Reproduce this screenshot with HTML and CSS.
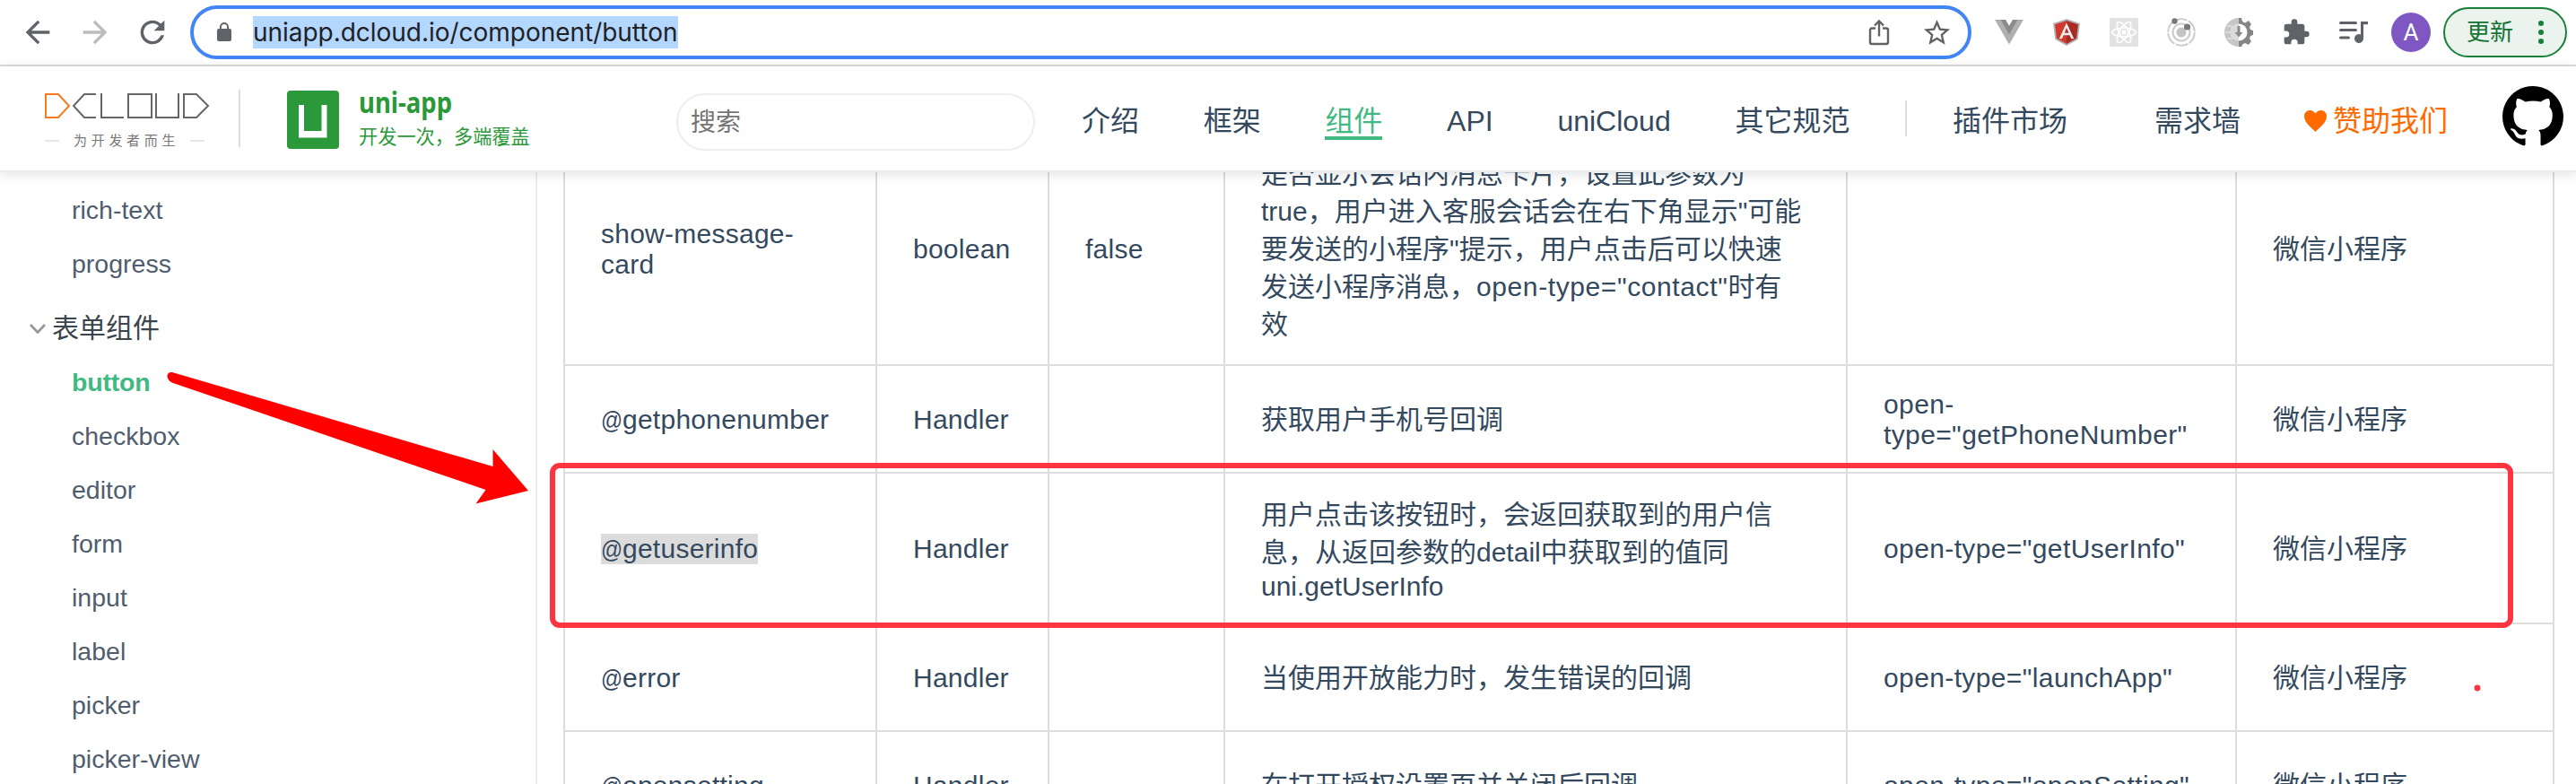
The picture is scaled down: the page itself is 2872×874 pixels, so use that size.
FILE: index.html
```html
<!DOCTYPE html>
<html lang="zh-CN">
<head>
<meta charset="utf-8">
<title>button | uni-app</title>
<link rel="stylesheet" href="styles.css">
</head>
<body>
<div class="browser-bar">
  <div class="controls">
    <svg class="ctl" viewBox="0 0 24 24"><path fill="#5f6368" d="M20 11H7.83l5.59-5.59L12 4l-8 8 8 8 1.41-1.41L7.83 13H20v-2z"/></svg>
    <svg class="ctl" viewBox="0 0 24 24"><path fill="#babcbe" d="M12 4l-1.41 1.41L16.17 11H4v2h12.17l-5.58 5.59L12 20l8-8z"/></svg>
    <svg class="ctl" viewBox="0 0 24 24"><path fill="#5f6368" d="M17.65 6.35A7.96 7.96 0 0 0 12 4a8 8 0 1 0 7.73 10h-2.08A6 6 0 1 1 12 6c1.66 0 3.14.69 4.22 1.78L13 11h7V4l-2.35 2.35z"/></svg>
  </div>
  <div class="omnibox">
    <svg class="lock" viewBox="0 0 24 24"><path fill="#5f6368" d="M18 8h-1V6A5 5 0 0 0 7 6v2H6a2 2 0 0 0-2 2v10c0 1.100.9 2 2 2h12a2 2 0 0 0 2-2V10a2 2 0 0 0-2-2zM8.900 6a3.100 3.100 0 0 1 6.200 0v2H8.900V6z"/></svg>
    <span class="url">uniapp.dcloud.io/component/button</span>
    <svg class="share" viewBox="0 0 24 30" fill="none" stroke="#5f6368" stroke-width="2.400"><path d="M8 10.500H4a2 2 0 0 0-2 2V26a2 2 0 0 0 2 2h16a2 2 0 0 0 2-2V12.500a2 2 0 0 0-2-2h-4M12 19.500V2.500M7 7.500l5-5 5 5"/></svg>
    <svg class="star" viewBox="0 0 24 24"><path fill="#5f6368" d="M22 9.240l-7.190-.62L12 2 9.190 8.630 2 9.240l5.460 4.730L5.820 21 12 17.270 18.180 21l-1.630-7.030L22 9.240zM12 15.400l-3.760 2.270 1-4.280-3.320-2.880 4.380-.38L12 6.100l1.710 4.040 4.380.38-3.320 2.880 1 4.280L12 15.400z"/></svg>
  </div>
  <div class="extensions">
    <svg viewBox="0 0 32 32"><path fill="#b0b0b0" d="M0 2h12l4 7 4-7h12L16 29.500z"/><path fill="#8b8b8b" d="M6.500 2H12l4 7 4-7h5.500L16 18.500z"/></svg>
    <svg viewBox="0 0 32 32"><path fill="#b3b3b3" d="M16 1l15 5-2.300 18L16 31 3.300 24 1 6z"/><path fill="#d0392f" d="M16 3L3 7.300l2 15.400L16 29z"/><path fill="#a92b24" d="M16 3l13 4.300-2 15.400L16 29z"/><path fill="#eee" fill-rule="evenodd" d="M16 5.500L7.800 23.300h3.100l1.700-4.100h6.900l1.700 4.100h3.100zM16 11l2.400 5.800h-4.800z"/></svg>
    <svg viewBox="0 0 32 32"><rect width="32" height="32" rx="2" fill="#e2e2e2"/><g fill="none" stroke="#fff" stroke-width="1.600"><ellipse cx="16" cy="16" rx="13" ry="5"/><ellipse cx="16" cy="16" rx="13" ry="5" transform="rotate(60 16 16)"/><ellipse cx="16" cy="16" rx="13" ry="5" transform="rotate(120 16 16)"/></g><circle cx="16" cy="16" r="2.600" fill="#fff"/></svg>
    <svg viewBox="0 0 32 32"><g fill="none"><circle cx="16" cy="16" r="14.800" stroke="#ccc" stroke-width="2" stroke-dasharray="14 1.500"/><circle cx="16" cy="16" r="9.500" stroke="#ccc" stroke-width="2.200"/></g><circle cx="16" cy="16" r="5.500" fill="#c4c4c4"/><circle cx="8.500" cy="3.500" r="3.200" fill="#777"/><circle cx="22.500" cy="10" r="3.600" fill="#777"/></svg>
    <svg viewBox="0 0 32 32"><path fill="#c6c6c6" d="M16 0a16 16 0 0 0 0 32z"/><path fill="#858585" d="M16 0h3l1 4 3 1.500L27 3l3 4-2 3 1 3 3 1v5l-3 1-1 3 2 3-3 4-4-2-3 1.500-1 3.500h-3z"/><circle cx="16" cy="16" r="9.500" fill="#fff"/><path fill="#bdbdbd" d="M16 6.500a9.500 9.500 0 0 0 0 19z" opacity=".55"/><path fill="#8b8b8b" d="M14.500 9h3v7h3L16 21.500 11.500 16h3z"/><path stroke="#eee" d="M3 9h6M1 16h5M3 23h6"/></svg>
    <svg viewBox="0 0 24 24"><path fill="#5f6368" d="M20.500 11H19V7a2 2 0 0 0-2-2h-4V3.500a2.500 2.500 0 0 0-5 0V5H4a2 2 0 0 0-1.990 2v3.800H3.500a2.700 2.700 0 0 1 0 5.400H2V20a2 2 0 0 0 2 2h3.800v-1.500a2.700 2.700 0 0 1 5.400 0V22H17a2 2 0 0 0 2-2v-4h1.500a2.500 2.500 0 0 0 0-5z"/></svg>
    <svg viewBox="0 0 32 32"><path fill="none" stroke="#5f6368" stroke-width="3" stroke-linecap="round" d="M1.500 5.500h17M1.500 13.500h17M1.500 22h9"/><path fill="#5f6368" d="M24 4h8v3.200h-5V23a5 5 0 1 1-3-4.600z"/></svg>
  </div>
  <div class="avatar">A</div>
  <div class="update"><span>更新</span><i class="dots"></i></div>
</div>

<header class="site-header">
  <div class="dcloud">
    <svg class="dcloud-mark" viewBox="0 0 184 28" fill="none" stroke-width="2"><path stroke="#f47b20" d="M1 1h14l12 13-12 13H1z"/><g stroke="#666"><path d="M57 1H44L32 14l12 13h13M63 0v27h25M93 1h26v26H93zM124 0v27h25V0M155 1h14l13 13-13 13h-14z"/></g></svg>
    <div class="dcloud-tag"><i></i><span>为开发者而生</span><i></i></div>
  </div>
  <div class="brand">
    <svg class="uni-mark" viewBox="0 0 58 65"><rect width="58" height="65" rx="4" fill="#2b9939"/><path fill="#fff" d="M13.500 16h6v29h19.500V16h6v36.500H13.500z" transform="translate(-.5 0)"/></svg>
    <div class="brand-text"><b>uni-app</b><span>开发一次，多端覆盖</span></div>
  </div>
  <div class="search">搜索</div>
  <nav class="links">
    <a>介绍</a><a>框架</a><a class="active">组件</a><a>API</a><a>uniCloud</a><a>其它规范</a>
  </nav>
  <nav class="links-more">
    <a class="market">插件市场</a><a class="wall">需求墙</a>
    <a class="sponsor"><svg viewBox="0 0 25 24"><path fill="#ff6a00" d="M12.500 24C8 19 0 14 0 6.500C0 2.500 3 0 6.500 0c2.500 0 4.800 1.300 6 3.800C13.700 1.300 16 0 18.500 0 22 0 25 2.500 25 6.500 25 14 17 19 12.500 24z"/></svg>赞助我们</a>
  </nav>
  <svg class="github" viewBox="0 0 16 16"><path d="M8 0C3.580 0 0 3.580 0 8c0 3.540 2.290 6.530 5.470 7.590.4.070.55-.17.55-.38 0-.19-.01-.82-.01-1.490-2.010.37-2.530-.49-2.690-.94-.09-.23-.48-.94-.82-1.130-.28-.15-.68-.52-.01-.53.63-.01 1.080.58 1.230.82.72 1.210 1.870.87 2.330.66.07-.52.28-.87.51-1.070-1.780-.2-3.640-.89-3.640-3.950 0-.87.31-1.590.82-2.150-.08-.2-.36-1.020.08-2.120 0 0 .67-.21 2.200.82.64-.18 1.320-.27 2-.27s1.360.09 2 .27c1.530-1.040 2.200-.82 2.200-.82.44 1.100.16 1.920.08 2.120.51.56.82 1.270.82 2.150 0 3.070-1.870 3.750-3.650 3.950.29.25.54.73.54 1.480 0 1.070-.01 1.930-.01 2.200 0 .21.15.46.55.38A8.010 8.010 0 0 0 16 8c0-4.420-3.580-8-8-8z"/></svg>
</header>

<div class="content">
  <aside class="sidebar">
    <a>rich-text</a>
    <a>progress</a>
    <h3><svg viewBox="0 0 18 11"><path fill="none" stroke="#999" stroke-width="2.800" d="M1 1l8 8.500L17 1"/></svg>表单组件</h3>
    <a class="current">button</a>
    <a>checkbox</a>
    <a>editor</a>
    <a>form</a>
    <a>input</a>
    <a>label</a>
    <a>picker</a>
    <a>picker-view</a>
  </aside>
  <main>
    <table>
      <colgroup><col class="c1"><col class="c2"><col class="c3"><col class="c4"><col class="c5"><col class="c6"></colgroup>
      <tr class="tall">
        <td class="en">show-message-<br>card</td><td class="en">boolean</td><td class="en">false</td>
        <td class="zh">是否显示会话内消息卡片，设置此参数为<br>true，用户进入客服会话会在右下角显示"可能<br>要发送的小程序"提示，用户点击后可以快速<br>发送小程序消息，<span class="en-word">open-type="contact"</span>时有<br>效</td>
        <td></td><td class="zh">微信小程序</td>
      </tr>
      <tr>
        <td class="en"><span class="at">@</span>getphonenumber</td><td class="en">Handler</td><td></td>
        <td class="zh">获取用户手机号回调</td>
        <td class="en wide">open-<br>type="getPhoneNumber"</td><td class="zh">微信小程序</td>
      </tr>
      <tr class="mid">
        <td class="en"><span class="picked"><span class="at">@</span>getuserinfo</span></td><td class="en">Handler</td><td></td>
        <td class="zh">用户点击该按钮时，会返回获取到的用户信<br>息，从返回参数的detail中获取到的值同<div class="en-line">uni.getUserInfo</div></td>
        <td class="en wide">open-type="getUserInfo"</td><td class="zh">微信小程序</td>
      </tr>
      <tr>
        <td class="en"><span class="at">@</span>error</td><td class="en">Handler</td><td></td>
        <td class="zh">当使用开放能力时，发生错误的回调</td>
        <td class="en wide">open-type="launchApp"</td><td class="zh">微信小程序</td>
      </tr>
      <tr>
        <td class="en"><span class="at">@</span>opensetting</td><td class="en">Handler</td><td></td>
        <td class="zh">在打开授权设置页并关闭后回调</td>
        <td class="en wide">open-type="openSetting"</td><td class="zh">微信小程序</td>
      </tr>
    </table>
  </main>
</div>

<svg class="marks" viewBox="0 0 2872 874">
  <path fill="#f00" d="M192 415L549.500 520V501L589 547 530.500 561.500 541.500 546 193 427C184 423 185 414 192 415z"/>
  <rect x="616" y="519" width="2183" height="178" rx="8" fill="none" stroke="#ff3341" stroke-width="6"/>
  <circle cx="2762" cy="767" r="3.400" fill="#ff3341"/>
</svg>
</body>
</html>
```

FILE: styles.css
```css
* { box-sizing: border-box; }

body {
  margin: 0;
  width: 2872px;
  height: 874px;
  overflow: hidden;
  position: relative;
  background: #fff;
  color: #34495e;
  font-family: "Liberation Sans", "Noto Sans CJK SC", sans-serif;
}

svg { display: block; flex: none; }

/* Browser toolbar */
.browser-bar {
  display: flex;
  align-items: center;
  height: 74px;
  padding-left: 22px;
  border-bottom: 2px solid #dcdcdc;
}
.controls { display: flex; gap: 24px; width: 190px; flex: none; }
.ctl { width: 40px; height: 40px; }
.omnibox {
  display: flex;
  align-items: center;
  flex: none;
  width: 1986px;
  height: 60px;
  padding: 0 17px 0 22px;
  border: 4px solid #4285f4;
  border-radius: 30px;
}
.lock { width: 24px; height: 24px; margin-right: 20px; }
.url {
  width: 474px;
  height: 36px;
  line-height: 36px;
  background: #b3d7ff;
  color: #202124;
  font-family: Inter, "Liberation Sans", sans-serif;
  font-size: 28px;
  letter-spacing: -0.03px;
  white-space: nowrap;
}
.share { width: 24px; height: 30px; margin-left: auto; margin-right: 35px; }
.star { width: 35px; height: 35px; }
.extensions { display: flex; align-items: center; gap: 32px; margin-left: 26px; }
.extensions svg { width: 32px; height: 32px; }
.avatar {
  width: 44px;
  height: 44px;
  margin-left: 26px;
  border-radius: 50%;
  background: #7e57c2;
  color: #fff;
  font: 26px/45px Roboto, sans-serif;
  text-align: center;
}
.update {
  display: flex;
  align-items: center;
  width: 138px;
  height: 56px;
  margin-left: 14px;
  padding-left: 24px;
  border: 2px solid #188038;
  border-radius: 28px;
  background: #ebf3ee;
  color: #137333;
  font-size: 26px;
  line-height: 52px;
}
.dots {
  width: 6px;
  height: 6px;
  margin-left: 28px;
  border-radius: 50%;
  background: #188038;
  box-shadow: 0 -10px #188038, 0 10px #188038;
}

/* Site header */
.site-header {
  position: relative;
  z-index: 2;
  display: flex;
  align-items: flex-start;
  height: 118px;
  padding-left: 50px;
  background: #fff;
  border-bottom: 2px solid #eaecef;
  box-shadow: 0 2px 12px rgba(0, 20, 50, 0.13);
}
.dcloud {
  width: 218px;
  height: 64px;
  margin-top: 26px;
  padding-top: 4px;
  border-right: 2px solid #ddd;
}
.dcloud-mark { width: 184px; height: 28px; }
.dcloud-tag {
  display: flex;
  align-items: center;
  margin-top: 13px;
  color: #777;
  font-size: 15px;
  line-height: 24px;
  letter-spacing: 4.7px;
}
.dcloud-tag i { width: 16px; height: 2px; background: #e6e6e6; }
.dcloud-tag span { width: 130px; padding-left: 16px; margin-right: 16px; white-space: nowrap; }
.brand { display: flex; width: 434px; margin: 27px 0 0 52px; }
.uni-mark { width: 58px; height: 65px; }
.brand-text { margin-left: 22px; color: #2b9939; }
.brand-text b {
  display: block;
  height: 35px;
  margin-top: -5px;
  font: bold 32px/35px "Noto Sans", "Open Sans", sans-serif;
  transform: scaleX(0.86);
  transform-origin: left;
}
.brand-text span { display: block; font-size: 21.2px; line-height: 30px; margin-top: 7px; }
.search {
  width: 400px;
  height: 64px;
  margin-top: 30px;
  padding-left: 14px;
  border: 2px solid #eee;
  border-radius: 32px;
  color: #757575;
  font-size: 28px;
  line-height: 61px;
}
.links {
  display: flex;
  gap: 71.700px;
  width: 920px;
  height: 40px;
  margin: 38px 0 0 52px;
  border-right: 2px solid #ddd;
}
.links a, .links-more a { font-size: 32px; line-height: 46px; white-space: nowrap; }
.links a { height: 44px; }
.links .active { color: #42b983; border-bottom: 4px solid #42b983; }
.links-more { display: flex; width: 664px; margin-top: 38px; padding-left: 51px; }
.wall { margin-left: 97px; }
.sponsor { display: flex; align-items: center; gap: 7px; margin-left: 71px; color: #ff6a00; }
.sponsor svg { width: 25px; height: 24px; }
.github { width: 68px; height: 68px; margin-top: 22px; }

/* Page body */
.content { display: flex; height: 682px; overflow: hidden; }
.sidebar {
  width: 599px;
  flex: none;
  height: 682px;
  padding-top: 12px;
  border-right: 2px solid #eaecef;
}
.sidebar a {
  display: block;
  padding-left: 80px;
  color: #505d6e;
  font-size: 28.5px;
  line-height: 60px;
}
.sidebar .current { color: #42b983; font-weight: bold; letter-spacing: -0.2px; }
.sidebar h3 {
  display: flex;
  align-items: center;
  gap: 7px;
  height: 72px;
  margin: 0;
  padding: 12px 0 0 33px;
  color: #3a454e;
  font-size: 30px;
  font-weight: 400;
  line-height: 60px;
}
.sidebar h3 svg { width: 18px; height: 11px; }

main { padding-left: 29px; }
table {
  width: 2220px;
  margin-top: -44px;
  table-layout: fixed;
  border-collapse: separate;
  border-spacing: 0;
  border-left: 2px solid #ddd;
}
.c1 { width: 348px; }
.c2 { width: 192px; }
.c3 { width: 196px; }
.c4 { width: 694px; }
.c5 { width: 434px; }
.c6 { width: 354px; }
td {
  height: 120px;
  padding: 1px 0 0 40px;
  border-right: 2px solid #ddd;
  border-bottom: 2px solid #ddd;
  font-size: 30px;
  vertical-align: middle;
  white-space: nowrap;
}
.tall td { height: 260px; }
.mid td { height: 168px; }
.en { line-height: 34px; letter-spacing: 0.25px; }
.wide { letter-spacing: 0.38px; }
.zh { padding-top: 2px; line-height: 42px; }
.en-word { letter-spacing: 0.6px; }
.en-line { line-height: 34px; }
.at {
  display: inline-block;
  width: 24px;
  font-size: 28px;
  line-height: 30px;
  letter-spacing: 0;
  transform: scaleX(0.85);
  transform-origin: left;
}
.picked { display: inline-block; height: 34px; background: #dcdcdc; }

/* Hand-drawn annotations over the page */
.marks {
  position: absolute;
  z-index: 3;
  left: 0;
  top: 0;
  width: 2872px;
  height: 874px;
}
```
